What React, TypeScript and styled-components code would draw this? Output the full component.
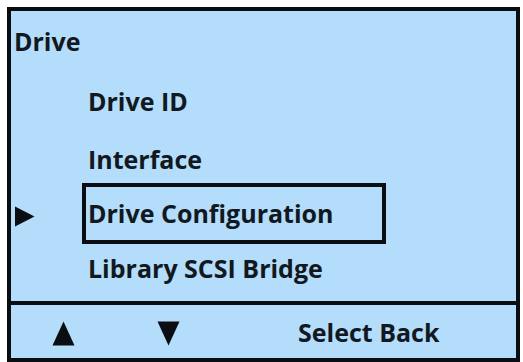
import React from "react";
import styled, { createGlobalStyle } from "styled-components";

const GlobalStyle = createGlobalStyle`
  html, body {
    margin: 0;
    padding: 0;
    background: #ffffff;
    overflow: hidden;
  }
`;

const Screen = styled.div`
  box-sizing: border-box;
  margin: 7px 0 0 7px;
  width: 513px;
  height: 355px;
  border: 4px solid #0a0d12;
  background: #b4dcfb;
  display: flex;
  flex-direction: column;
  font-family: "Open Sans", Lato, sans-serif;
  font-weight: 700;
  font-size: 25px;
  color: #111820;
`;

const Menu = styled.div`
  flex: 1;
  display: grid;
  grid-template-rows: 60px 59px 57px 52px 58px;
`;

const Heading = styled.div`
  display: flex;
  align-items: center;
  padding-left: 3px;
`;

const Row = styled.div`
  display: flex;
  align-items: center;
`;

const Marker = styled.div`
  width: 71px;
  flex-shrink: 0;
  display: flex;
  align-items: center;
  padding: 6px 0 0 3px;
  box-sizing: border-box;
`;

const Label = styled.div<{ $selected?: boolean }>`
  box-sizing: border-box;
  flex-shrink: 0;
  display: flex;
  align-items: center;
  width: 304px;
  height: ${(p) => (p.$selected ? "61px" : "auto")};
  padding-left: 2px;
  border: 4px solid ${(p) => (p.$selected ? "#0a0d12" : "transparent")};
`;

const Footer = styled.div`
  box-sizing: border-box;
  height: 57px;
  border-top: 4px solid #0a0d12;
  display: grid;
  grid-template-columns: 105px 105px 1fr;
  align-items: center;
`;

const KeyIcon = styled.div`
  display: flex;
  justify-content: center;
  padding-top: 4px;
`;

const KeyText = styled.div`
  padding-left: 77px;
`;

const Pointer = () => (
  <svg width="21" height="21" viewBox="0 0 21 21">
    <path d="M1 0.5 L20.5 10.5 L1 20.5 Z" fill="#0a0d12" />
  </svg>
);

const UpArrow = () => (
  <svg width="23" height="25" viewBox="0 0 23 25">
    <path d="M11.5 0.5 L22.5 24.5 L0.5 24.5 Z" fill="#0a0d12" strokeLinejoin="round" />
  </svg>
);

const DownArrow = () => (
  <svg width="23" height="25" viewBox="0 0 23 25">
    <path d="M0.5 0.5 L22.5 0.5 L11.5 24.5 Z" fill="#0a0d12" />
  </svg>
);

const items = ["Drive ID", "Interface", "Drive Configuration", "Library SCSI Bridge"];
const selectedIndex = 2;

export default function App() {
  return (
    <>
      <GlobalStyle />
      <Screen>
        <Menu>
          <Heading>Drive</Heading>
          {items.map((item, i) => (
            <Row key={item}>
              <Marker>{i === selectedIndex && <Pointer />}</Marker>
              <Label $selected={i === selectedIndex}>{item}</Label>
            </Row>
          ))}
        </Menu>
        <Footer>
          <KeyIcon>
            <UpArrow />
          </KeyIcon>
          <KeyIcon>
            <DownArrow />
          </KeyIcon>
          <KeyText>Select Back</KeyText>
        </Footer>
      </Screen>
    </>
  );
}
